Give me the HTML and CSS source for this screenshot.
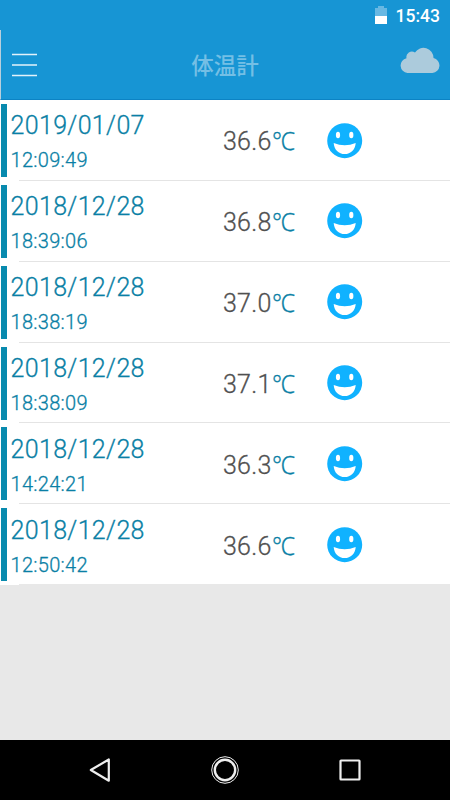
FILE: index.html
```html
<!DOCTYPE html>
<html lang="ja">
<head>
<meta charset="utf-8">
<title>体温計</title>
<link rel="stylesheet" href="styles.css">
</head>
<body>
<svg class="defs" aria-hidden="true">
<symbol id="smile" viewBox="0 0 36 36">
<circle cx="17.700" cy="17.700" r="17.5" fill="#10b2ff"/>
<ellipse cx="11" cy="12" rx="2.100" ry="3.200" fill="#fff"/>
<ellipse cx="24.300" cy="12" rx="2.100" ry="3.200" fill="#fff"/>
<path d="M6.700 19.900Q17.700 24.700 28.700 19.900C28.400 26.500 23.700 31 17.700 31S7 26.500 6.700 19.900Z" fill="#fff"/>
</symbol>
</svg>
<div class="status">
<svg class="battery" width="12" height="18" viewBox="0 0 12 18"><path d="M0 2h3V0h6v2h3v8H0z" fill="#67b8e3"/><path d="M0 10h12v8H0z" fill="#fff"/></svg>
<span class="clock">15:43</span>
</div>
<header class="bar">
<svg class="menu" width="25" height="24" viewBox="0 0 25 24"><path d="M0 1.500h25M0 12h25M0 22.500h25" stroke="#e3f2fa" stroke-width="1.600"/></svg>
<h1>体温計</h1>
<svg class="cloud" width="40" height="27" viewBox="0 0 40 27"><path d="M7.500 26A7.500 7.500 0 0 1 6.500 11.200A5.500 5.500 0 0 1 15 5.500A10 10 0 0 1 33.500 11A7.600 7.600 0 0 1 32.400 26Z" fill="#accbdc"/></svg>
</header>
<main class="list">
<article class="row"><div class="when"><span class="date">2019/01/07</span><span class="time">12:09:49</span></div><div class="temp">36.6<span class="unit">℃</span></div><svg class="face"><use href="#smile"/></svg></article>
<article class="row"><div class="when"><span class="date">2018/12/28</span><span class="time">18:39:06</span></div><div class="temp">36.8<span class="unit">℃</span></div><svg class="face"><use href="#smile"/></svg></article>
<article class="row"><div class="when"><span class="date">2018/12/28</span><span class="time">18:38:19</span></div><div class="temp">37.0<span class="unit">℃</span></div><svg class="face"><use href="#smile"/></svg></article>
<article class="row"><div class="when"><span class="date">2018/12/28</span><span class="time">18:38:09</span></div><div class="temp">37.1<span class="unit">℃</span></div><svg class="face"><use href="#smile"/></svg></article>
<article class="row"><div class="when"><span class="date">2018/12/28</span><span class="time">14:24:21</span></div><div class="temp">36.3<span class="unit">℃</span></div><svg class="face"><use href="#smile"/></svg></article>
<article class="row"><div class="when"><span class="date">2018/12/28</span><span class="time">12:50:42</span></div><div class="temp">36.6<span class="unit">℃</span></div><svg class="face"><use href="#smile"/></svg></article>
</main>
<nav class="nav">
<svg width="30" height="30" viewBox="0 0 30 30"><path d="M5.800 15L23.800 4.500v21.200Z"/></svg>
<svg width="30" height="30" viewBox="0 0 30 30"><circle class="inner" cx="15" cy="15" r="10.200"/><circle class="outer" cx="15" cy="15" r="13.300"/></svg>
<svg width="30" height="30" viewBox="0 0 30 30"><rect x="5.500" y="5.500" width="19" height="19" rx=".5"/></svg>
</nav>
</body>
</html>
```

FILE: styles.css
```css
* { box-sizing: border-box; }
body {
  margin: 0;
  width: 450px;
  height: 800px;
  display: flex;
  flex-direction: column;
  overflow: hidden;
  background: #e8e8e8;
  font-family: Roboto, "Noto Sans CJK JP", sans-serif;
}
svg { display: block; flex: none; }
.defs { width: 0; height: 0; position: absolute; }
.status {
  height: 30px;
  flex: none;
  display: flex;
  align-items: center;
  justify-content: flex-end;
  gap: 9px;
  padding: 1px 10px 0 0;
  background: #1795d4;
  color: #fff;
}
.clock { font-size: 17.5px; font-weight: 500; line-height: 30px; }
.battery { margin-top: -1px; }
.bar {
  height: 70px;
  flex: none;
  display: flex;
  justify-content: space-between;
  padding: 0 10px 0 11px;
  background: #1795d4;
  border-left: 1px solid #b9cfdc;
  border-bottom: 1px solid #0c83c4;
}
.menu { margin-top: 23px; }
h1 {
  margin: 19px 0 0 13px;
  font-size: 22.5px;
  line-height: 34px;
  font-weight: 500;
  color: #74bfe5;
}
.cloud { margin-top: 17px; }
.list { flex: none; height: 485px; }
.row {
  height: 80.85px;
  display: flex;
  padding: 4px 0 0 1px;
  background: linear-gradient(#e4e4e4, #e4e4e4) 19px 100% / 431px 1px no-repeat #fff;
}
.row:last-child { background: linear-gradient(#e8e8e8, #e8e8e8) 19px 100% / 431px 1px no-repeat #fff; }
.when {
  width: 222px;
  height: 73px;
  border-left: 6px solid #088aae;
  padding: 6.3px 0 0 3.5px;
  display: flex;
  flex-direction: column;
  color: #0a7fa5;
}
.date { font-size: 25px; font-weight: 300; line-height: 32px; letter-spacing: .35px; -webkit-text-stroke: .3px; }
.time { font-size: 20px; font-weight: 300; line-height: 28px; margin-top: 4px; letter-spacing: .3px; -webkit-text-stroke: .3px; }
.temp {
  width: 104px;
  font-size: 25px;
  font-weight: 300;
  letter-spacing: .25px;
  -webkit-text-stroke: .3px;
  line-height: 30px;
  padding-top: 21.3px;
  color: #505050;
  white-space: nowrap;
}
.unit { color: #0a7fa5; font-family: "Noto Sans", "Noto Sans CJK JP", sans-serif; display: inline-block; transform: scaleX(.93); transform-origin: 0 50%; }
.face { width: 36px; height: 36px; margin-top: 18.500px; }
.nav {
  height: 60px;
  flex: none;
  margin-top: auto;
  display: flex;
  justify-content: space-between;
  align-items: center;
  padding: 0 85px;
  background: #000;
}
.nav svg { fill: none; stroke: #eee; stroke-width: 2.2; stroke-linejoin: round; }
.nav .inner { stroke-width: 2.4; }
.nav .outer { stroke-width: 1; }
```
